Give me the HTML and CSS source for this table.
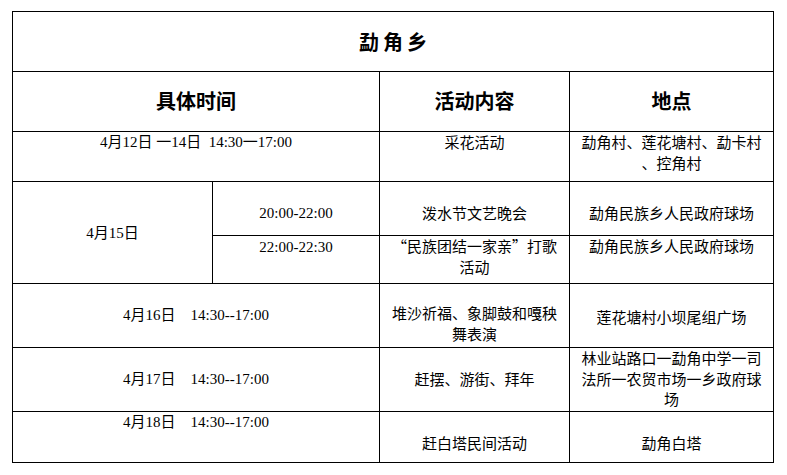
FILE: index.html
```html
<!DOCTYPE html>
<html lang="zh-CN">
<head>
<meta charset="utf-8">
<title>勐角乡</title>
<link rel="stylesheet" href="styles.css">
</head>
<body>
<table class="sched">
  <colgroup>
    <col class="c1"><col class="c2"><col class="c3"><col class="c4">
  </colgroup>
  <tr class="r-title"><th colspan="4" class="title">勐角乡</th></tr>
  <tr class="r-head"><th colspan="2" class="head">具体时间</th><th class="head">活动内容</th><th class="head">地点</th></tr>
  <tr class="r1">
    <td colspan="2" class="date top">4月12日 一14日&nbsp;&nbsp;14:30一17:00</td>
    <td class="cn top">采花活动</td>
    <td class="cn top">勐角村、莲花塘村、勐卡村<br>、控角村</td>
  </tr>
  <tr class="r2">
    <td rowspan="2" class="date mid">4月15日</td>
    <td class="date low">20:00-22:00</td>
    <td class="cn low">泼水节文艺晚会</td>
    <td class="cn low">勐角民族乡人民政府球场</td>
  </tr>
  <tr class="r3">
    <td class="date top1">22:00-22:30</td>
    <td class="cn top">“民族团结一家亲”打歌<br>活动</td>
    <td class="cn top">勐角民族乡人民政府球场</td>
  </tr>
  <tr class="r4">
    <td colspan="2" class="date low">4月16日&nbsp;&nbsp;&nbsp;&nbsp;14:30--17:00</td>
    <td class="cn low2">堆沙祈福、象脚鼓和嘎秧<br>舞表演</td>
    <td class="cn low3">莲花塘村小坝尾组广场</td>
  </tr>
  <tr class="r5">
    <td colspan="2" class="date low">4月17日&nbsp;&nbsp;&nbsp;&nbsp;14:30--17:00</td>
    <td class="cn low">赶摆、游街、拜年</td>
    <td class="cn top">林业站路口一勐角中学一司<br>法所一农贸市场一乡政府球<br>场</td>
  </tr>
  <tr class="r6">
    <td colspan="2" class="date top">4月18日&nbsp;&nbsp;&nbsp;&nbsp;14:30--17:00</td>
    <td class="cn low">赶白塔民间活动</td>
    <td class="cn low">勐角白塔</td>
  </tr>
</table>
</body>
</html>
```
FILE: styles.css
```css
html, body {
  background: #ffffff;
}
body {
  margin: 11px 0 0 12px;
  color: #000000;
}
.sched {
  border-collapse: collapse;
  table-layout: fixed;
  width: 762px;
}
.c1 { width: 200px; }
.c2 { width: 167px; }
.c3 { width: 190px; }
.c4 { width: 204px; }
.sched th,
.sched td {
  border: 1px solid #000000;
  padding: 0;
  text-align: center;
  vertical-align: top;
  line-height: 20.5px;
}
.r-title { height: 60px; }
.r-head { height: 60px; }
.r1 { height: 50px; }
.r2 { height: 54px; }
.r3 { height: 48px; }
.r4 { height: 64px; }
.r5 { height: 64px; }
.r6 { height: 51px; }
.sched .title {
  font-family: "Noto Sans CJK SC", sans-serif;
  font-size: 20px;
  font-weight: bold;
  letter-spacing: 4px;
  padding: 2px 0 0 4px;
  vertical-align: middle;
}
.sched .head {
  font-family: "Noto Sans CJK SC", sans-serif;
  font-size: 20px;
  font-weight: bold;
  vertical-align: middle;
}
.date {
  font-family: "Liberation Serif", "Noto Sans CJK SC", serif;
  font-size: 15px;
  white-space: nowrap;
}
.cn {
  font-family: "Noto Sans CJK SC", sans-serif;
  font-size: 15px;
}
.sched .top { padding-top: 0; }
.sched .top1 { padding-top: 1px; }
.sched .mid { vertical-align: middle; padding-top: 2px; }
.sched .low { padding-top: 21px; }
.sched .low2 { padding-top: 19px; }
.sched .low3 { padding-top: 23px; }
```
